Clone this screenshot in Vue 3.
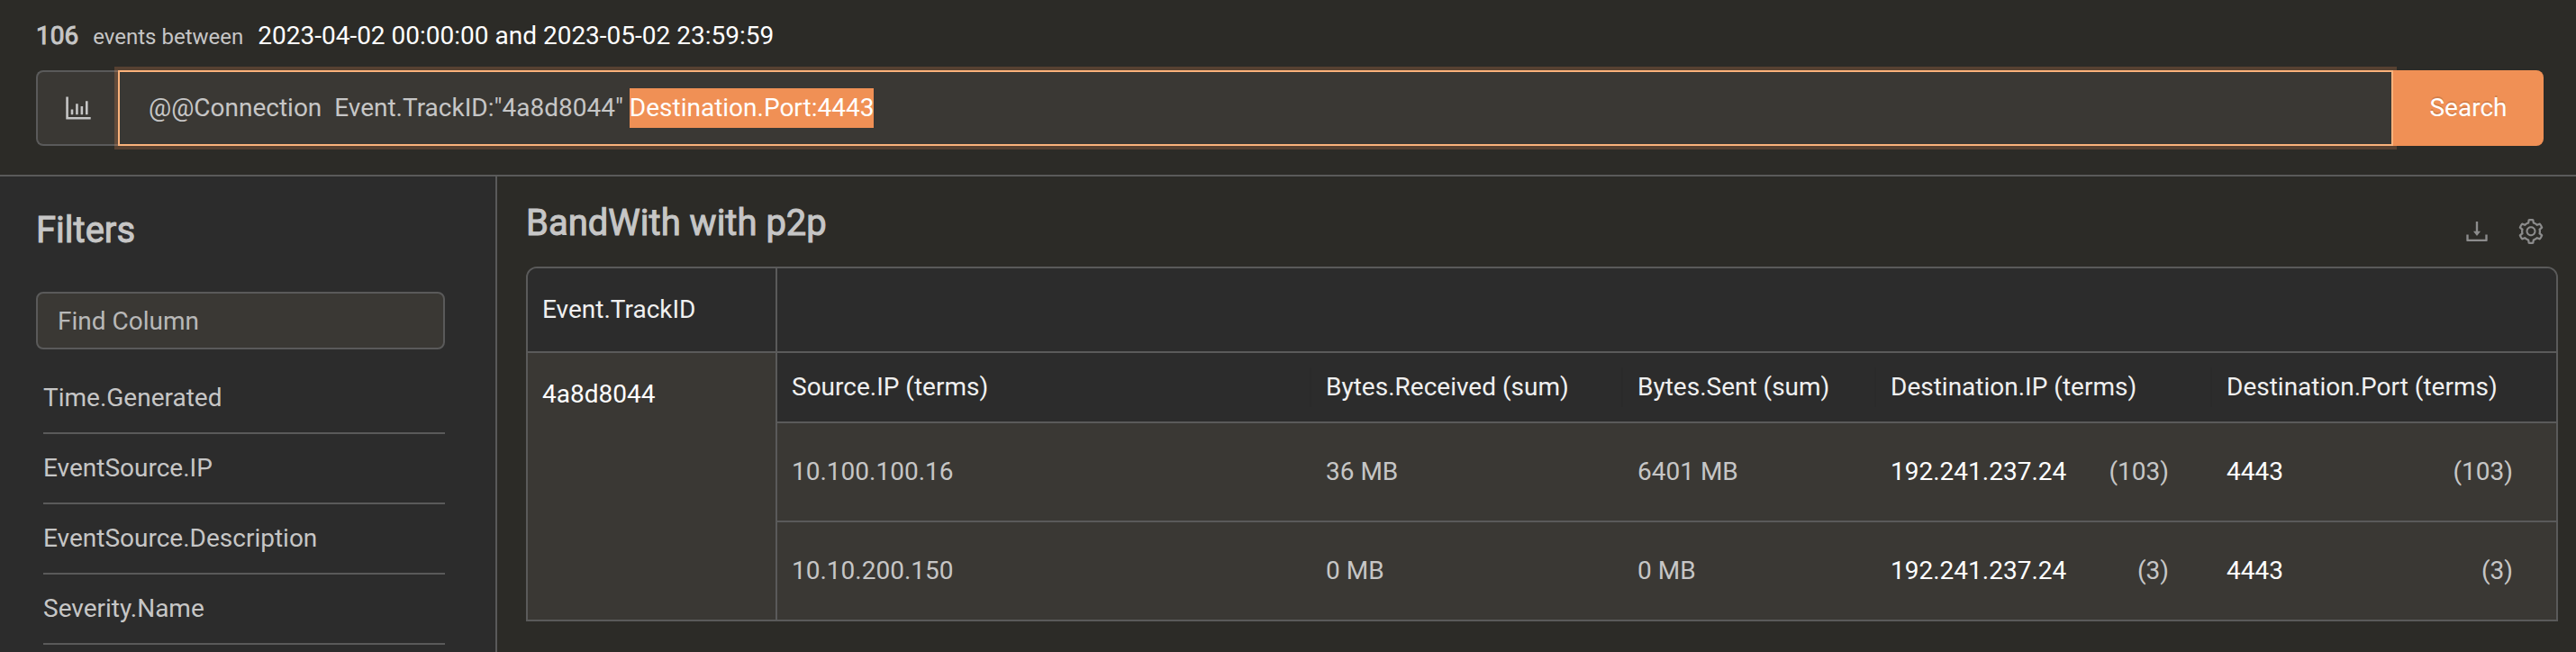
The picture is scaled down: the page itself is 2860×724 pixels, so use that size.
<script setup>
import { onMounted, ref } from 'vue'

const query = ref('@@Connection  Event.TrackID:"4a8d8044" Destination.Port:4443')
const queryBox = ref(null)
const columnFilter = ref('')

const filters = ['Time.Generated', 'EventSource.IP', 'EventSource.Description', 'Severity.Name']

const columns = [
  { key: 'source', label: 'Source.IP (terms)' },
  { key: 'received', label: 'Bytes.Received (sum)' },
  { key: 'sent', label: 'Bytes.Sent (sum)' },
  { key: 'destination', label: 'Destination.IP (terms)' },
  { key: 'port', label: 'Destination.Port (terms)' },
]

const rows = [
  { source: '10.100.100.16', received: '36 MB', sent: '6401 MB', destination: '192.241.237.24', port: '4443', count: 103 },
  { source: '10.10.200.150', received: '0 MB', sent: '0 MB', destination: '192.241.237.24', port: '4443', count: 3 },
]

const counted = (key) => key === 'destination' || key === 'port'

onMounted(() => {
  const start = query.value.indexOf('Destination.Port')
  queryBox.value.focus()
  queryBox.value.setSelectionRange(start, query.value.length)
})
</script>

<template>
  <div class="page">
    <header class="top">
      <p class="summary">
        <strong class="total">106</strong>
        <span class="between">events between</span>
        <span class="range">2023-04-02 00:00:00 and 2023-05-02 23:59:59</span>
      </p>
      <form class="search" @submit.prevent>
        <button type="button" class="chart-button" aria-label="Chart">
          <svg class="chart-icon" viewBox="64 64 896 896" aria-hidden="true">
            <path d="M888 792H200V168c0-4.4-3.6-8-8-8h-56c-4.4 0-8 3.6-8 8v688c0 4.4 3.6 8 8 8h752c4.4 0 8-3.6 8-8v-56c0-4.4-3.6-8-8-8zm-600-80h56c4.4 0 8-3.6 8-8V560c0-4.4-3.6-8-8-8h-56c-4.4 0-8 3.6-8 8v144c0 4.4 3.6 8 8 8zm152 0h56c4.4 0 8-3.6 8-8V384c0-4.4-3.6-8-8-8h-56c-4.4 0-8 3.6-8 8v320c0 4.4 3.6 8 8 8zm152 0h56c4.4 0 8-3.6 8-8V462c0-4.4-3.6-8-8-8h-56c-4.4 0-8 3.6-8 8v242c0 4.4 3.6 8 8 8zm152 0h56c4.4 0 8-3.6 8-8V304c0-4.4-3.6-8-8-8h-56c-4.4 0-8 3.6-8 8v400c0 4.4 3.6 8 8 8z" />
          </svg>
        </button>
        <input ref="queryBox" v-model="query" class="query" type="text" aria-label="Query" spellcheck="false" autocomplete="off" />
        <button type="submit" class="submit">Search</button>
      </form>
    </header>

    <div class="body">
      <aside class="sidebar">
        <h2 class="heading filters-heading">Filters</h2>
        <input v-model="columnFilter" class="find" type="text" placeholder="Find Column" aria-label="Find Column" />
        <ul class="filters">
          <li v-for="name in filters" :key="name" class="filter">{{ name }}</li>
        </ul>
      </aside>

      <main class="results">
        <div class="title-bar">
          <h1 class="heading">BandWith with p2p</h1>
          <div class="tools">
            <button type="button" class="tool" aria-label="Download">
              <svg viewBox="64 64 896 896" aria-hidden="true">
                <path d="M505.7 661a8 8 0 0012.6 0l112-141.7c4.1-5.2.4-12.9-6.3-12.9h-74.1V168c0-4.4-3.6-8-8-8h-60c-4.4 0-8 3.6-8 8v338.3H400c-6.7 0-10.4 7.7-6.3 12.9l112 141.8zM878 626h-60c-4.4 0-8 3.6-8 8v154H214V634c0-4.4-3.6-8-8-8h-60c-4.4 0-8 3.6-8 8v198c0 17.7 14.3 32 32 32h684c17.7 0 32-14.3 32-32V634c0-4.4-3.6-8-8-8z" />
              </svg>
            </button>
            <button type="button" class="tool" aria-label="Settings">
              <svg viewBox="64 64 896 896" aria-hidden="true">
                <path d="M924.8 625.7l-65.5-56c3.1-19 4.7-38.4 4.7-57.8s-1.6-38.8-4.7-57.8l65.5-56a32.03 32.03 0 009.3-35.2l-.9-2.6a443.74 443.74 0 00-79.7-137.9l-1.8-2.1a32.12 32.12 0 00-35.1-9.5l-81.3 28.9c-30-24.6-63.5-44-99.7-57.6l-15.7-85a32.05 32.05 0 00-25.8-25.7l-2.7-.5c-52.1-9.4-106.9-9.4-159 0l-2.7.5a32.05 32.05 0 00-25.8 25.7l-15.8 85.4a351.86 351.86 0 00-99 57.4l-81.9-29.1a32 32 0 00-35.1 9.5l-1.8 2.1a446.02 446.02 0 00-79.7 137.9l-.9 2.6c-4.5 12.5-.8 26.5 9.3 35.2l66.3 56.6c-3.1 18.8-4.6 38-4.6 57.1 0 19.2 1.5 38.4 4.6 57.1L99 625.5a32.03 32.03 0 00-9.3 35.2l.9 2.6c18.1 50.4 44.9 96.9 79.7 137.9l1.8 2.1a32.12 32.12 0 0035.1 9.5l81.9-29.1c29.8 24.5 63.1 43.9 99 57.4l15.8 85.4a32.05 32.05 0 0025.8 25.7l2.7.5a449.4 449.4 0 00159 0l2.7-.5a32.05 32.05 0 0025.8-25.7l15.7-85a350 350 0 0099.7-57.6l81.3 28.9a32 32 0 0035.1-9.5l1.8-2.1c34.8-41.1 61.6-87.5 79.7-137.9l.9-2.6c4.5-12.3.8-26.3-9.3-35zM788.3 465.9c2.5 15.1 3.8 30.6 3.8 46.1s-1.3 31-3.8 46.1l-6.6 40.1 74.7 63.9a370.03 370.03 0 01-42.6 73.6L721 702.8l-31.4 25.8c-23.9 19.6-50.5 35-79.3 45.8l-38.1 14.3-17.9 97a377.5 377.5 0 01-85 0l-17.9-97.2-37.8-14.5c-28.5-10.8-55-26.2-78.7-45.7l-31.4-25.9-93.4 33.2c-17-22.9-31.2-47.6-42.6-73.6l75.5-64.5-6.5-40c-2.4-14.9-3.7-30.3-3.7-45.5 0-15.3 1.2-30.6 3.7-45.5l6.5-40-75.5-64.5c11.3-26.1 25.6-50.7 42.6-73.6l93.4 33.2 31.4-25.9c23.7-19.5 50.2-34.9 78.7-45.7l37.9-14.3 17.9-97.2c28.1-3.2 56.8-3.2 85 0l17.9 97 38.1 14.3c28.7 10.8 55.4 26.2 79.3 45.8l31.4 25.8 92.8-32.9c17 22.9 31.2 47.6 42.6 73.6L781.8 426l6.5 39.9zM512 326c-97.2 0-176 78.8-176 176s78.8 176 176 176 176-78.8 176-176-78.8-176-176-176zm79.2 255.2A111.6 111.6 0 01512 614c-29.9 0-58-11.7-79.2-32.8A111.6 111.6 0 01400 502c0-29.9 11.7-58 32.8-79.2C454 401.6 482.1 390 512 390c29.9 0 58 11.6 79.2 32.8A111.6 111.6 0 01624 502c0 29.9-11.7 58-32.8 79.2z" />
              </svg>
            </button>
          </div>
        </div>

        <table class="groups">
          <colgroup>
            <col class="group-col" />
            <col />
          </colgroup>
          <thead>
            <tr>
              <th scope="col" class="group-head">Event.TrackID</th>
              <td class="group-head"></td>
            </tr>
          </thead>
          <tbody>
            <tr>
              <td class="group-name">4a8d8044</td>
              <td class="group-body">
                <table class="details">
                  <colgroup>
                    <col v-for="c in columns" :key="c.key" :class="'col-' + c.key" />
                  </colgroup>
                  <thead>
                    <tr>
                      <th v-for="c in columns" :key="c.key" scope="col">{{ c.label }}</th>
                    </tr>
                  </thead>
                  <tbody>
                    <tr v-for="row in rows" :key="row.source">
                      <td v-for="c in columns" :key="c.key">
                        <div v-if="counted(c.key)" class="term">
                          <span class="term-value">{{ row[c.key] }}</span>
                          <span>({{ row.count }})</span>
                        </div>
                        <template v-else>{{ row[c.key] }}</template>
                      </td>
                    </tr>
                  </tbody>
                </table>
              </td>
            </tr>
          </tbody>
        </table>
      </main>
    </div>
  </div>
</template>

<style>
body {
  background: #2c2b27;
}
</style>

<style scoped>
.page {
  --line: #5a5a5a;
  --panel: #2c2c2c;
  --field: #3a3834;
  --text: #c6c6c6;
  --accent: #f09055;
  display: flex;
  flex-direction: column;
  min-height: 100vh;
  box-sizing: border-box;
  background: #2c2b27;
  color: var(--text);
  font-family: Roboto, "Liberation Sans", sans-serif;
  font-size: 28px;
  line-height: 44px;
}

.page * {
  box-sizing: border-box;
}

button,
input {
  margin: 0;
  font: inherit;
  color: inherit;
}

.top {
  padding: 18px 36px 32px 40px;
  border-bottom: 2px solid var(--line);
}

.summary {
  display: flex;
  align-items: baseline;
  gap: 16px;
  height: 44px;
  margin: 0 0 16px;
}

.total,
.heading {
  font-weight: 400;
  -webkit-text-stroke: 1px currentColor;
}

.between {
  font-size: 24px;
}

.range {
  color: #fff;
}

.search {
  display: flex;
  height: 84px;
}

.chart-button {
  display: flex;
  align-items: center;
  justify-content: center;
  width: 91px;
  padding: 0;
  border: 2px solid var(--line);
  border-right: 0;
  border-radius: 8px 0 0 8px;
  background: var(--field);
}

.chart-icon {
  width: 32px;
  height: 32px;
  fill: currentColor;
}

.query {
  flex: 1;
  min-width: 0;
  padding: 0 32px;
  border: 2px solid #fab27b;
  border-radius: 0;
  outline: 0;
  background: var(--field);
  box-shadow: 0 0 0 4px rgba(240, 144, 85, 0.22);
}

.query::selection {
  background: var(--accent);
  color: #fff;
}

.submit {
  width: 167px;
  padding: 0;
  border: 0;
  border-radius: 0 8px 8px 0;
  background: var(--accent);
  color: #fff;
  text-shadow: 0 -2px 0 rgba(0, 0, 0, 0.12);
  z-index: 1;
}

.body {
  display: flex;
  flex: 1;
}

.sidebar {
  flex: 0 0 552px;
  padding: 32px 56px 0 40px;
  border-right: 2px solid var(--line);
  background: var(--panel);
}

.heading {
  margin: 0;
  font-size: 40px;
  line-height: 56px;
}

.filters-heading {
  margin-bottom: 40px;
}

.find {
  width: 100%;
  height: 64px;
  padding: 0 22px;
  border: 2px solid var(--line);
  border-radius: 8px;
  background: var(--field);
}

.find::placeholder {
  color: #b8b8b8;
  opacity: 1;
}

.filters {
  margin: 16px 0 0 8px;
  padding: 0;
  list-style: none;
}

.filter {
  padding: 16px 0;
  border-bottom: 2px solid var(--line);
}

.results {
  flex: 1;
  min-width: 0;
  padding: 24px 20px 32px 32px;
}

.title-bar {
  display: flex;
  justify-content: space-between;
  align-items: flex-start;
  margin-bottom: 20px;
}

.tools {
  display: flex;
  gap: 32px;
  padding: 23px 16px 0 0;
}

.tool {
  display: flex;
  padding: 0;
  border: 0;
  background: none;
  color: #8c8c8c;
}

.tool svg {
  width: 28px;
  height: 28px;
  fill: currentColor;
}

table {
  width: 100%;
  border-spacing: 0;
  border-collapse: separate;
  table-layout: fixed;
}

th,
td {
  font-weight: 400;
  text-align: left;
}

.groups {
  border: 2px solid var(--line);
  border-radius: 12px 12px 0 0;
  overflow: hidden;
  color: #fff;
}

.group-col {
  width: 277px;
}

.group-head {
  padding: 24px 16px;
  border-bottom: 2px solid var(--line);
  background: var(--panel);
  color: #f0f0f0;
}

.group-head:first-child,
.group-name {
  border-right: 2px solid var(--line);
}

.group-name {
  padding: 24px 16px;
  vertical-align: top;
  background: var(--field);
}

.group-body {
  padding: 0;
}

.details th {
  position: relative;
  padding: 16px;
  border-bottom: 2px solid var(--line);
  background: var(--panel);
  color: #f0f0f0;
}

/* faint rule between neighbouring column headings */
.details th:not(:last-child)::after {
  content: "";
  position: absolute;
  top: 16px;
  right: 0;
  bottom: 16px;
  width: 2px;
  background: #2a2a2a;
}

.details td {
  padding: 32px 16px;
  border-bottom: 2px solid var(--line);
  background: var(--field);
  color: var(--text);
}

.details tbody tr:last-child td {
  border-bottom: 0;
}

.col-received {
  width: 346px;
}

.col-sent {
  width: 281px;
}

.col-destination {
  width: 373px;
}

.col-port {
  width: 382px;
}

.term {
  display: flex;
  justify-content: space-between;
  padding-right: 32px;
}

.term-value {
  color: #fff;
}
</style>
